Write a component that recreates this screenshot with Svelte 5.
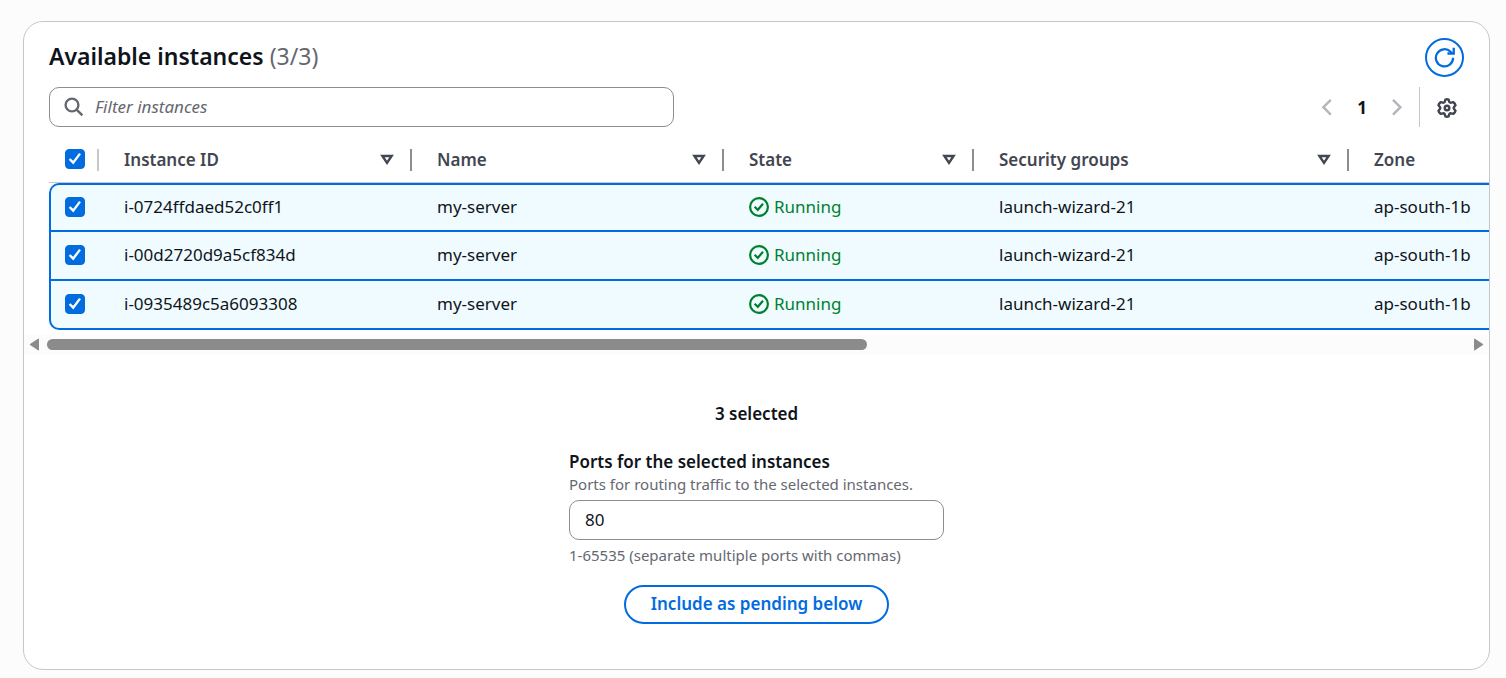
<script>
  let instances = $state([
    { id: 'i-0724ffdaed52c0ff1', name: 'my-server', state: 'Running', group: 'launch-wizard-21', zone: 'ap-south-1b', selected: true },
    { id: 'i-00d2720d9a5cf834d', name: 'my-server', state: 'Running', group: 'launch-wizard-21', zone: 'ap-south-1b', selected: true },
    { id: 'i-0935489c5a6093308', name: 'my-server', state: 'Running', group: 'launch-wizard-21', zone: 'ap-south-1b', selected: true }
  ]);
  const columns = ['Instance ID', 'Name', 'State', 'Security groups', 'Zone'];
  let filter = $state('');
  let ports = $state('80');
  let count = $derived(instances.filter((i) => i.selected).length);
  let all = $derived(count === instances.length);

  function toggleAll() {
    const next = !all;
    instances.forEach((i) => (i.selected = next));
  }
</script>

{#snippet tick()}
  <svg class="tick" viewBox="0 0 20 20" aria-hidden="true"><path d="M4.6 10 8.2 13.6 15 4.6" /></svg>
{/snippet}

<main>
  <section class="card">
    <header class="head">
      <h2>Available instances <span>({count}/{instances.length})</span></h2>
      <button class="refresh" aria-label="Refresh">
        <svg viewBox="0 0 20 20" aria-hidden="true">
          <path d="M18.2 10.3A8.2 8.2 0 1 1 15.8 4.5L17.6 6.2" />
          <path d="M18.8 .8V6.2H12.8" />
        </svg>
      </button>
    </header>

    <div class="tools">
      <label class="search">
        <svg viewBox="0 0 20 20" aria-hidden="true"><circle cx="8" cy="8" r="6.4" /><path d="M12.6 12.6 18.4 18.4" /></svg>
        <input type="text" placeholder="Filter instances" aria-label="Filter instances" bind:value={filter} />
      </label>
      <nav class="pager" aria-label="Pagination">
        <button class="arrow" aria-label="Previous page"><svg viewBox="0 0 20 20"><path d="M13.8 2.8 6.4 10.2 13.8 17.6" /></svg></button>
        <button class="page">1</button>
        <button class="arrow" aria-label="Next page"><svg viewBox="0 0 20 20"><path d="M6 2.8 13.4 10.2 6 17.6" /></svg></button>
        <button class="gear" aria-label="Preferences">
          <svg viewBox="0 0 20 20">
            <path d="M8.4 1.6Q10 .9 11.6 1.6L12.3 4Q13 4.8 14 4.7L16.4 4.2Q18.2 5.6 18.5 7.3L16.9 9.2Q16.5 10 16.9 10.8L18.5 12.7Q18.2 14.4 16.4 15.8L14 15.3Q13 15.2 12.3 16L11.6 18.4Q10 19.1 8.4 18.4L7.7 16Q7 15.2 6 15.3L3.6 15.8Q1.8 14.4 1.5 12.7L3.1 10.8Q3.5 10 3.1 9.2L1.5 7.3Q1.8 5.6 3.6 4.2L6 4.7Q7 4.8 7.7 4Z" />
            <circle cx="10" cy="10" r="2.3" />
          </svg>
        </button>
      </nav>
    </div>

    <div class="scroller">
      <table>
        <colgroup>
          <col class="c-check" /><col class="c-id" /><col class="c-name" /><col class="c-state" /><col class="c-group" /><col class="c-zone" />
        </colgroup>
        <thead>
          <tr>
            <th class="pick">
              <div class="th">
                <label class="check"><input type="checkbox" checked={all} onchange={toggleAll} aria-label="Select all" />{@render tick()}</label>
              </div>
            </th>
            {#each columns as column}
              <th>
                <div class="th">
                  <span>{column}</span>
                  <button class="sort" aria-label="Sort by {column}"><svg viewBox="0 0 14 12"><path d="M2.4 2H11.6L7 8.8Z" /></svg></button>
                </div>
              </th>
            {/each}
          </tr>
        </thead>
        <tbody>
          {#each instances as row}
            <tr class:selected={row.selected}>
              <td class="pick"><label class="check"><input type="checkbox" bind:checked={row.selected} aria-label="Select {row.id}" />{@render tick()}</label></td>
              <td>{row.id}</td>
              <td>{row.name}</td>
              <td>
                <span class="status">
                  <svg viewBox="0 0 20 20" aria-hidden="true"><circle cx="10" cy="10" r="8.9" /><path d="M5.6 9.8 8.8 12.8 14 6.8" /></svg>
                  {row.state}
                </span>
              </td>
              <td>{row.group}</td>
              <td>{row.zone}</td>
            </tr>
          {/each}
        </tbody>
      </table>
    </div>
    <div class="scrollbar" aria-hidden="true">
      <svg viewBox="0 0 10 12"><path d="M8.6 1V11L1.2 6Z" /></svg>
      <div class="track"><div class="thumb"></div></div>
      <svg viewBox="0 0 10 12"><path d="M1.4 1V11L8.8 6Z" /></svg>
    </div>

    <div class="form">
      <p class="selected-count">{count} selected</p>
      <div class="field">
        <label for="ports">Ports for the selected instances</label>
        <p class="hint">Ports for routing traffic to the selected instances.</p>
        <input id="ports" type="text" bind:value={ports} />
        <p class="hint">1-65535 (separate multiple ports with commas)</p>
      </div>
      <button class="include">Include as pending below</button>
    </div>
  </section>
</main>

<style>
  :global(body) {
    margin: 0;
    background: #fcfcfd;
  }
  main {
    padding: 21px 16px 8px 23px;
    font: 17px/25px 'Noto Sans', 'Open Sans', sans-serif;
    color: #0f141a;
  }
  * {
    box-sizing: border-box;
  }
  svg {
    display: block;
    fill: none;
    stroke: currentColor;
    stroke-width: 2.4;
  }
  button {
    padding: 0;
    border: 0;
    background: none;
    font: inherit;
    color: inherit;
    cursor: pointer;
  }
  h2,
  p {
    margin: 0;
  }
  .card {
    border: 1px solid #c6c6cd;
    border-radius: 20px;
    background: #fff;
    padding: 16px 0 45px;
    overflow: hidden;
  }
  .head,
  .tools {
    display: flex;
    align-items: center;
    justify-content: space-between;
    padding: 0 25px;
  }
  .head {
    align-items: flex-start;
    margin-bottom: 10px;
  }
  h2 {
    padding-top: 3px;
    font-size: 23px;
    line-height: 30px;
    font-weight: 600;
  }
  h2 span {
    color: #656871;
    font-weight: 400;
  }
  .refresh {
    display: grid;
    place-items: center;
    width: 39px;
    height: 39px;
    border: 2px solid #006ce0;
    border-radius: 50%;
    color: #006ce0;
  }
  .refresh svg {
    width: 21px;
    height: 21px;
    stroke-width: 2.2;
  }
  .search {
    display: flex;
    align-items: center;
    gap: 11px;
    flex: 0 1 625px;
    height: 40px;
    padding: 0 14px;
    border: 1px solid #8c8c94;
    border-radius: 10px;
    color: #656871;
  }
  .search svg {
    width: 20px;
    height: 20px;
  }
  .search input {
    flex: 1;
    min-width: 0;
    padding: 0 0 2px;
    border: 0;
    outline: 0;
    background: none;
    font: inherit;
  }
  .search input::placeholder {
    color: #656871;
    font-style: italic;
    opacity: 1;
  }
  .pager {
    display: flex;
    align-items: center;
    height: 40px;
  }
  .arrow {
    color: #b4b4bb;
  }
  .arrow svg {
    width: 20px;
    height: 20px;
  }
  .page {
    width: 50px;
    font-weight: 700;
    font-size: 17px;
  }
  .gear {
    margin-left: 12px;
    padding: 11px 7px 9px 17px;
    border-left: 1px solid #c6c6cd;
    color: #424650;
  }
  .gear svg {
    width: 20px;
    height: 20px;
    stroke-linejoin: round;
  }
  .scroller {
    margin-top: 10px;
    padding-left: 25px;
    overflow: hidden;
  }
  table {
    width: 1800px;
    table-layout: fixed;
    border-collapse: separate;
    border-spacing: 0;
  }
  .c-check {
    width: 50px;
  }
  .c-id {
    width: 313px;
  }
  .c-name {
    width: 312px;
  }
  .c-state {
    width: 250px;
  }
  .c-group {
    width: 375px;
  }
  th {
    height: 46px;
    padding: 0;
    border-bottom: 1px solid #c6c6cd;
    text-align: left;
    font-weight: 600;
    color: #424650;
  }
  .th {
    display: flex;
    align-items: center;
    justify-content: space-between;
    height: 22px;
    padding: 0 16px 0 25px;
    border-right: 2px solid #8c8c94;
  }
  .pick .th {
    padding-left: 16px;
    border-color: #c6c6cd;
  }
  .th .check {
    align-self: flex-start;
  }
  .sort svg {
    width: 14px;
    height: 12px;
  }
  td {
    height: 49px;
    padding: 0 25px 2px;
    border-bottom: 2px solid #ebebf0;
  }
  td.pick {
    padding: 0 0 2px 14px;
    border-left: 2px solid transparent;
  }
  tr.selected td {
    border-color: #006ce0;
    background: #f0fbff;
  }
  tbody tr:first-child td {
    border-top: 2px solid #006ce0;
  }
  tbody tr:first-child .pick {
    border-top-left-radius: 10px;
  }
  tbody tr:last-child .pick {
    border-bottom-left-radius: 10px;
  }
  .check {
    display: grid;
    width: 20px;
    height: 20px;
  }
  .check > :global(*) {
    grid-area: 1 / 1;
  }
  .check input {
    appearance: none;
    width: 20px;
    height: 20px;
    margin: 0;
    border: 1px solid #8c8c94;
    border-radius: 4px;
    background: #fff;
  }
  .check input:checked {
    border-color: #006ce0;
    background: #006ce0;
  }
  .tick {
    width: 20px;
    height: 20px;
    color: #fff;
    pointer-events: none;
  }
  .status {
    display: flex;
    align-items: center;
    gap: 5px;
    color: #00802f;
  }
  .status svg {
    width: 20px;
    height: 20px;
    stroke-width: 2.2;
  }
  .scrollbar {
    display: flex;
    align-items: center;
    gap: 7px;
    height: 19px;
    margin-top: 5px;
    padding: 0 5px;
    background: #fcfcfc;
  }
  .scrollbar svg {
    width: 11px;
    height: 13px;
    fill: #8b8b8b;
    stroke: #8b8b8b;
    stroke-width: 1;
    stroke-linejoin: round;
  }
  .track {
    flex: 1;
  }
  .thumb {
    width: calc(100% * 1415 / 2450);
    height: 11px;
    border-radius: 6px;
    background: #8b8b8b;
  }
  .form {
    display: flex;
    flex-direction: column;
    align-items: center;
    margin-top: 47px;
  }
  .selected-count,
  .field label {
    font-weight: 600;
  }
  .field {
    display: flex;
    flex-direction: column;
    width: 375px;
    max-width: 100%;
    margin: 23px 0 20px;
  }
  .hint {
    font-size: 15px;
    line-height: 20px;
    color: #656871;
  }
  .field input {
    height: 40px;
    margin: 6px 0 5px;
    padding: 0 15px 2px;
    border: 1px solid #8c8c94;
    border-radius: 10px;
    font: inherit;
    color: inherit;
  }
  .include {
    height: 39px;
    padding: 0 25px 2px;
    border: 2px solid #006ce0;
    border-radius: 20px;
    font-weight: 600;
    color: #006ce0;
  }
</style>
